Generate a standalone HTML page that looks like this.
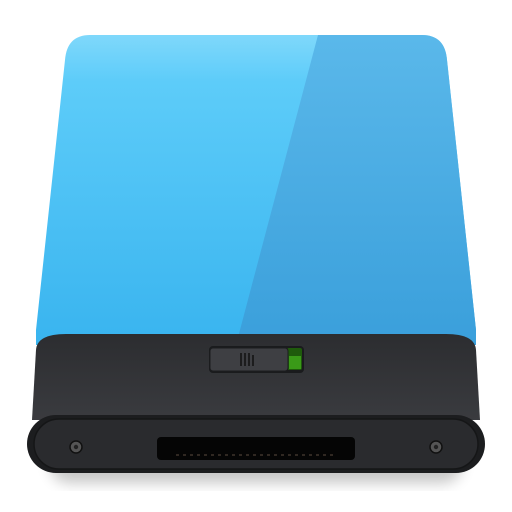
<!DOCTYPE html>
<html><head><style>html,body{margin:0;padding:0;background:#fff;width:512px;height:512px;overflow:hidden}</style></head>
<body>
<svg width="512" height="512" viewBox="0 0 512 512" xmlns="http://www.w3.org/2000/svg">
<defs>
<linearGradient id="bl" x1="0" y1="0" x2="0" y2="1">
<stop offset="0" stop-color="#7fd8fb"/><stop offset="0.15" stop-color="#5dccf9"/><stop offset="1" stop-color="#39b4ef"/>
</linearGradient>
<linearGradient id="br" x1="0" y1="0" x2="0" y2="1">
<stop offset="0" stop-color="#5ab8ea"/><stop offset="1" stop-color="#3a9fdb"/>
</linearGradient>
<linearGradient id="dk" x1="0" y1="0" x2="0" y2="1">
<stop offset="0" stop-color="#2c2d30"/><stop offset="1" stop-color="#3a3b3f"/>
</linearGradient>
<filter id="sh" x="-20%" y="-20%" width="140%" height="140%"><feGaussianBlur stdDeviation="7"/></filter>
</defs>
<rect x="50" y="445" width="412" height="38" rx="19" fill="#000" opacity="0.22" filter="url(#sh)"/>
<path d="M90 35 L422 35 Q445 35 447 60 L476 330 L476 345 L36 345 L36 330 L65 60 Q67 35 90 35Z" fill="url(#bl)"/>
<path d="M318 35 L422 35 Q445 35 447 60 L476 330 L476 345 L236 345 Z" fill="url(#br)"/>
<path d="M36 350 Q37 334 66 334 L446 334 Q475 334 476 350 L480 420 L32 420 Z" fill="url(#dk)"/>
<rect x="27" y="415" width="458" height="58" rx="29" fill="#1c1d1f"/>
<rect x="34" y="419" width="444" height="50" rx="25" fill="#2a2b2e" stroke="#151617" stroke-width="1.5"/>
<rect x="157" y="437" width="198" height="23" rx="4" fill="#050505"/>
<line x1="176" y1="455" x2="336" y2="455" stroke="#5a4a40" stroke-width="1" stroke-dasharray="3 4"/>
<circle cx="76" cy="447" r="6" fill="#555" stroke="#111" stroke-width="1.5"/><circle cx="76" cy="447" r="2.2" fill="#222"/>
<circle cx="436" cy="447" r="6" fill="#555" stroke="#111" stroke-width="1.5"/><circle cx="436" cy="447" r="2.2" fill="#222"/>
<rect x="209" y="346" width="95" height="27" rx="4" fill="#1a1b1d"/>
<rect x="287" y="348" width="15" height="22" rx="2" fill="#1f5a0c"/>
<rect x="289" y="356" width="12" height="13" fill="#3a9a18"/>
<rect x="210" y="348" width="78" height="23" rx="3" fill="#3e3f43" stroke="#1c1d1f" stroke-width="1"/>
<g stroke="#111" stroke-width="1.5"><line x1="241" y1="353" x2="241" y2="366"/><line x1="245" y1="353" x2="245" y2="366"/><line x1="249" y1="353" x2="249" y2="366"/><line x1="253" y1="355" x2="253" y2="366"/></g>
</svg>
</body></html>
